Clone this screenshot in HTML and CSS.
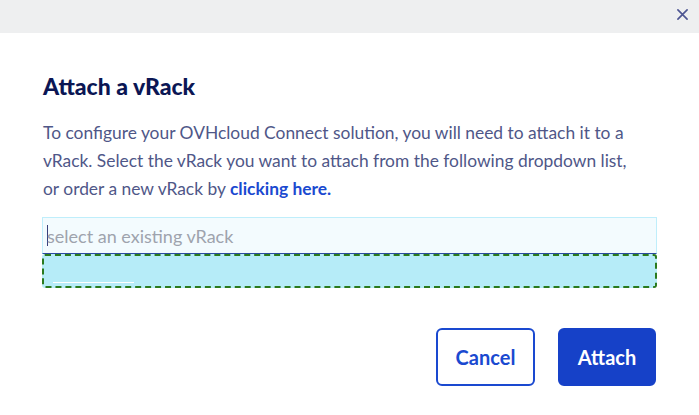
FILE: index.html
```html
<!DOCTYPE html>
<html lang="en">
<head>
<meta charset="utf-8">
<title>Attach a vRack</title>
<link rel="stylesheet" href="styles.css">
</head>
<body>
<div class="modal">
  <div class="modal-top">
    <button class="close" aria-label="Close">
      <svg width="11" height="11" viewBox="0 0 12 12"><path d="M1 1L11 11M11 1L1 11" stroke="#4d5592" stroke-width="1.8" fill="none" stroke-linecap="round"/></svg>
    </button>
  </div>
  <div class="modal-body">
    <h2 class="title">Attach a vRack</h2>
    <p class="desc">To configure your OVHcloud Connect solution, you will need to attach it to a vRack. Select the vRack you want to attach from the following dropdown list,<br>or order a new vRack by <a class="link" href="#">clicking here.</a></p>
    <div class="select">
      <div class="select-input"><span class="caret"></span><span class="placeholder">select an existing vRack</span></div>
      <div class="select-menu"><span class="menu-line"></span></div>
    </div>
    <div class="actions">
      <button class="btn btn-secondary">Cancel</button>
      <button class="btn btn-primary">Attach</button>
    </div>
  </div>
</div>
</body>
</html>
```
FILE: styles.css
```css
* { box-sizing: border-box; }
html, body { margin: 0; padding: 0; background: #ffffff; }
body { font-family: Lato, "Noto Sans", sans-serif; width: 699px; height: 415px; overflow: hidden; }
.modal { width: 699px; }
.modal-top { height: 33px; background: #eeeff0; display: flex; justify-content: flex-end; align-items: center; padding-right: 11px; }
.close { border: 0; background: none; padding: 0; width: 11px; height: 11px; display: flex; margin-top: -4px; }
.modal-body { padding: 40px 43px 0 43px; }
.title { margin: 0; font-size: 23px; font-weight: 900; color: #0b1654; line-height: 26px; }
.desc { margin: 20px 0 0 0; font-size: 17.4px; line-height: 28px; color: #4f5788; }
.link { color: #1a49d0; font-weight: 700; text-decoration: none; }
.select { margin-top: 14px; margin-left: -1px; margin-right: -1px; }
.select-input { height: 37px; background: #f3fbfe; border: 1px solid #bfeefb; border-bottom: 1px solid #2c4aa0; display: flex; align-items: center; padding-left: 4px; }
.caret { width: 1px; height: 21px; background: #39407a; }
.placeholder { color: #9ea3ad; font-size: 18px; margin-left: -1px; }
.select-menu { height: 34px; background: #b6ecf8; border: 2px dashed #2a7a1e; border-radius: 3px; position: relative; }
.menu-line { position: absolute; left: 9px; bottom: 3px; width: 81px; height: 1px; background: #ffffff; }
.actions { display: flex; justify-content: flex-end; gap: 23px; margin-top: 40px; }
.btn { font-family: Lato, "Noto Sans", sans-serif; font-size: 20px; font-weight: 700; height: 58px; border-radius: 6px; cursor: pointer; }
.btn-secondary { width: 99px; background: #ffffff; border: 2px solid #1a49d0; color: #1a49d0; }
.btn-primary { width: 98px; background: #1641c8; border: 2px solid #1641c8; color: #ffffff; }
```
